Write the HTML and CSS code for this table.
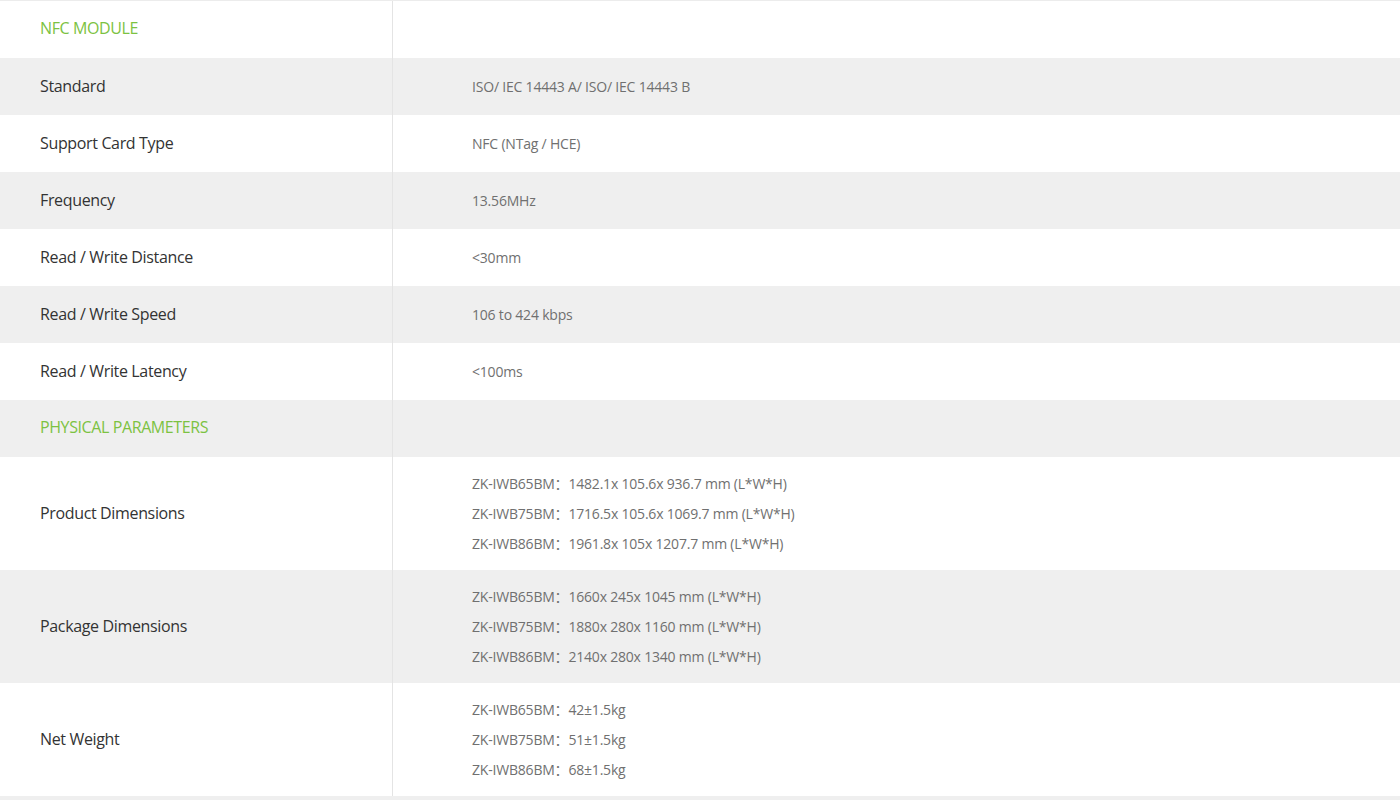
FILE: index.html
```html
<!DOCTYPE html>
<html lang="en">
<head>
  <meta charset="UTF-8" />
  <meta name="viewport" content="width=device-width, initial-scale=1.0"/>
  <title>Specifications</title>
  <link rel="stylesheet" href="styles.css">
</head>
<body>

  <!-- Spec table -->
  <div class="spec-table">
    <div class="spec-row">
      <div class="spec-label group">NFC MODULE</div>
      <div class="spec-value"></div>
    </div>
    <div class="spec-row alt">
      <div class="spec-label">Standard</div>
      <div class="spec-value">ISO/ IEC 14443 A/ ISO/ IEC 14443 B</div>
    </div>
    <div class="spec-row">
      <div class="spec-label">Support Card Type</div>
      <div class="spec-value">NFC (NTag / HCE)</div>
    </div>
    <div class="spec-row alt">
      <div class="spec-label">Frequency</div>
      <div class="spec-value">13.56MHz</div>
    </div>
    <div class="spec-row">
      <div class="spec-label">Read / Write Distance</div>
      <div class="spec-value">&lt;30mm</div>
    </div>
    <div class="spec-row alt">
      <div class="spec-label">Read / Write Speed</div>
      <div class="spec-value">106 to 424 kbps</div>
    </div>
    <div class="spec-row">
      <div class="spec-label">Read / Write Latency</div>
      <div class="spec-value">&lt;100ms</div>
    </div>
    <div class="spec-row alt">
      <div class="spec-label group">PHYSICAL PARAMETERS</div>
      <div class="spec-value"></div>
    </div>
    <div class="spec-row tall">
      <div class="spec-label">Product Dimensions</div>
      <div class="spec-value">
        <ul class="lines">
          <li>ZK-IWB65BM：1482.1x 105.6x 936.7 mm (L*W*H)</li>
          <li>ZK-IWB75BM：1716.5x 105.6x 1069.7 mm (L*W*H)</li>
          <li>ZK-IWB86BM：1961.8x 105x 1207.7 mm (L*W*H)</li>
        </ul>
      </div>
    </div>
    <div class="spec-row tall alt">
      <div class="spec-label">Package Dimensions</div>
      <div class="spec-value">
        <ul class="lines">
          <li>ZK-IWB65BM：1660x 245x 1045 mm (L*W*H)</li>
          <li>ZK-IWB75BM：1880x 280x 1160 mm (L*W*H)</li>
          <li>ZK-IWB86BM：2140x 280x 1340 mm (L*W*H)</li>
        </ul>
      </div>
    </div>
    <div class="spec-row tall">
      <div class="spec-label">Net Weight</div>
      <div class="spec-value">
        <ul class="lines">
          <li>ZK-IWB65BM：42±1.5kg</li>
          <li>ZK-IWB75BM：51±1.5kg</li>
          <li>ZK-IWB86BM：68±1.5kg</li>
        </ul>
      </div>
    </div>
    <div class="spec-row end alt"></div>
  </div>

</body>
</html>
```

FILE: styles.css
```css
* {
  margin: 0;
  padding: 0;
  box-sizing: border-box;
}

body, html {
  height: 100%;
  font-family: 'Open Sans', 'Noto Sans CJK SC', sans-serif;
  background: #fff;
  overflow: hidden;
}

.spec-table {
  border-top: 1px solid #ececec;
}

.spec-row {
  display: grid;
  grid-template-columns: 393px 1fr;
  height: 57px;
  background: #fff;
}

.spec-row.alt {
  background: #efefef;
}

.spec-row.tall {
  height: 113px;
}

.spec-row.end {
  height: 4px;
}

.spec-label {
  display: flex;
  align-items: center;
  padding: 0 0 2px 40px;
  border-right: 1px solid #e4e4e4;
  font-size: 16px;
  letter-spacing: -0.35px;
  color: #333;
}

.spec-label.group {
  color: #7cc242;
  letter-spacing: -0.4px;
  padding-bottom: 3px;
}

.spec-value {
  display: flex;
  align-items: center;
  padding-left: 79px;
  font-size: 14px;
  letter-spacing: -0.2px;
  color: #707070;
}

.lines {
  list-style: none;
}

.lines li {
  line-height: 30px;
}
```
